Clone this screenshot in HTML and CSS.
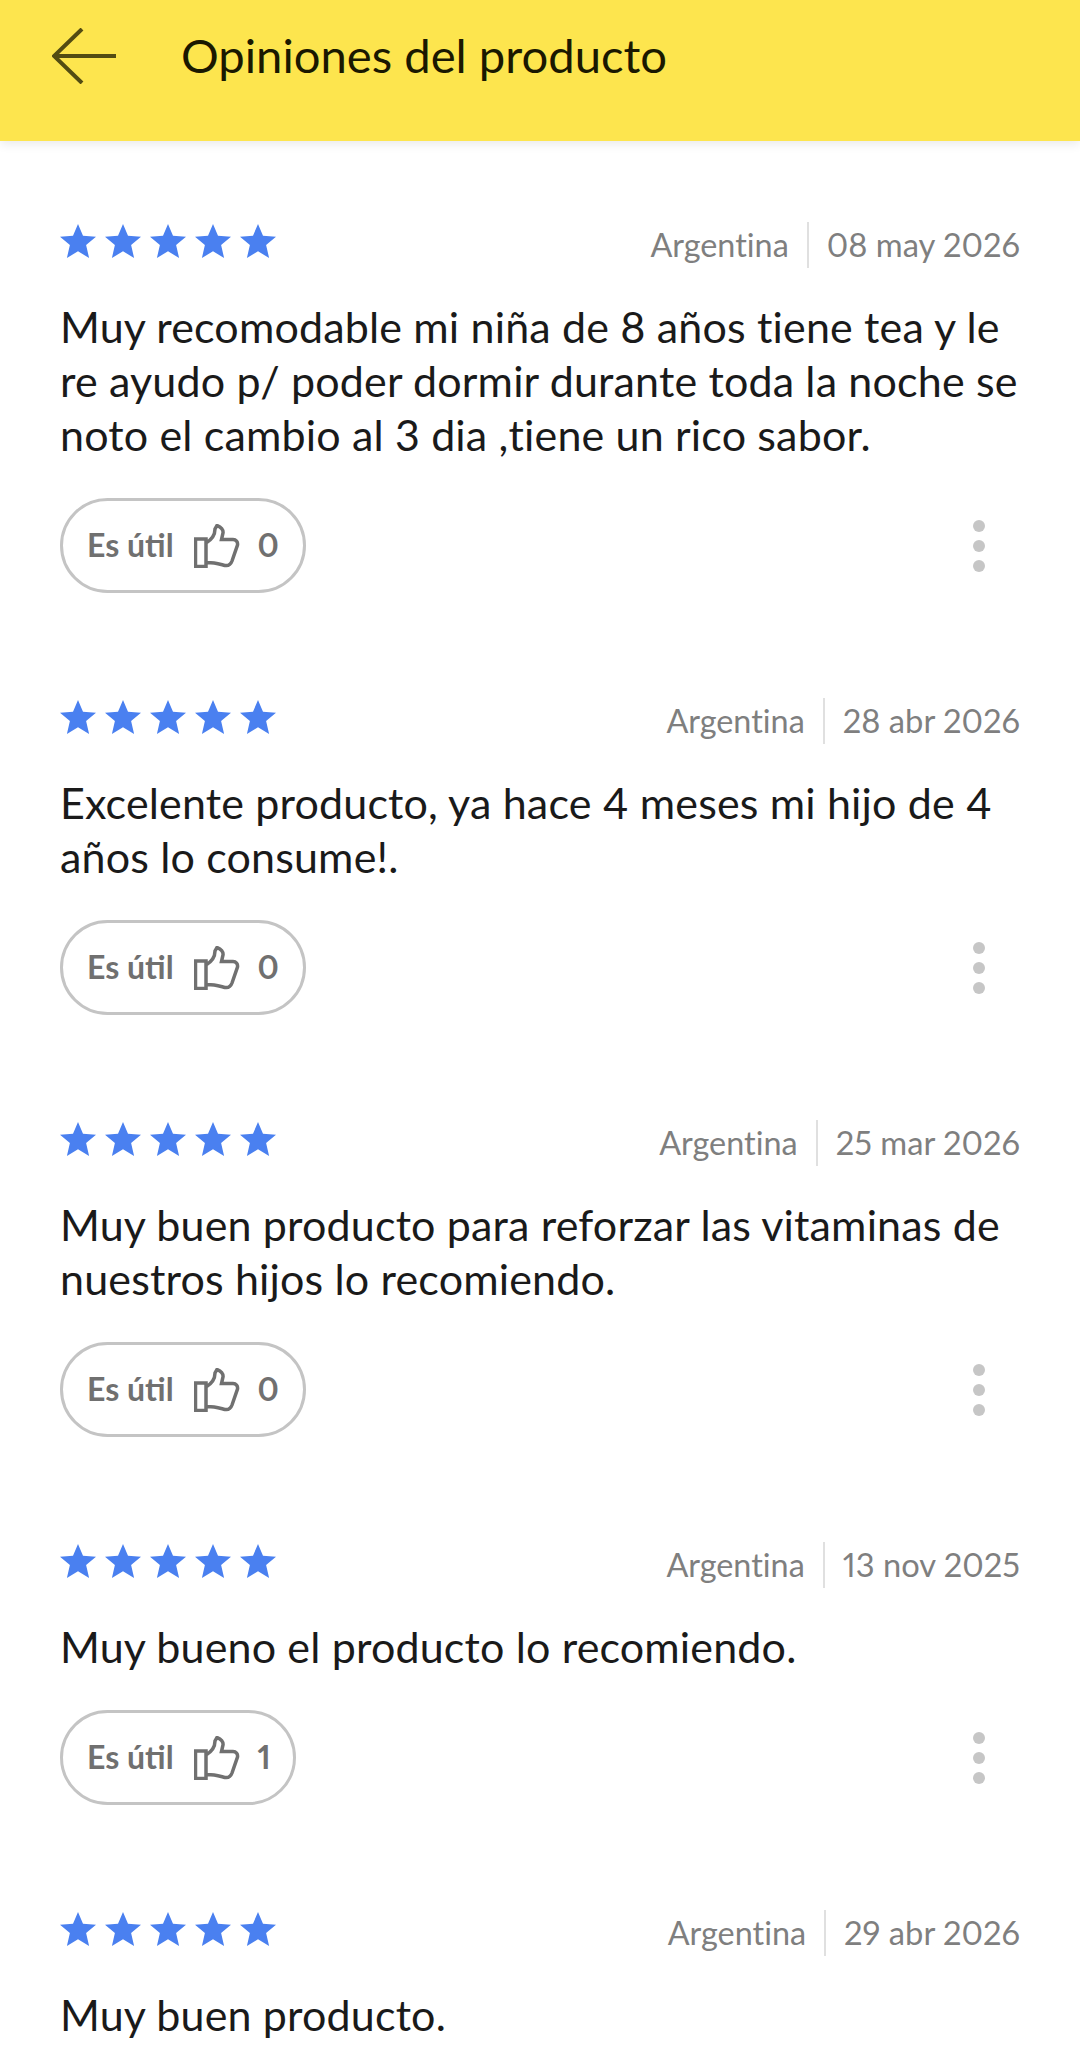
FILE: index.html
```html
<!DOCTYPE html>
<html lang="es">
<head>
<meta charset="utf-8">
<title>Opiniones del producto</title>
<link rel="stylesheet" href="styles.css">
</head>
<body>
<svg class="defs" width="0" height="0" aria-hidden="true">
  <defs>
    <symbol id="star" viewBox="0 0 36 34"><path d="M18 0l5 11.700 13 1.100-9.900 8.200 3 13L18 27.300 6.900 34l3-13L0 12.800l13-1.100z"/></symbol>
    <symbol id="thumb" viewBox="0 0 46 44"><path d="M1.500 15H12V42.500H1.500z M12 19C17 16 21 11 21 5L23 1.500C27 3 29.500 6 29 9L27.500 15.500H39C42 15.500 44 18 43.500 21L38 37C36.500 41 34 42 31 41.500C25 40 19 38 12 38.500" /></symbol>
  </defs>
</svg>
<header class="topbar">
  <svg class="back" viewBox="0 0 64 56" aria-hidden="true"><path d="M64 28H2M30 1L2 28l28 27" /></svg>
  <h1 class="title">Opiniones del producto</h1>
</header>
<main class="list">
  <article class="review">
    <div class="head">
      <div class="stars"><svg class="star"><use href="#star"/></svg><svg class="star"><use href="#star"/></svg><svg class="star"><use href="#star"/></svg><svg class="star"><use href="#star"/></svg><svg class="star"><use href="#star"/></svg></div>
      <div class="meta"><span class="place">Argentina</span><span class="date">08 may 2026</span></div>
    </div>
    <p class="text">Muy recomodable mi niña de 8 años tiene tea y le re ayudo p/ poder dormir durante toda la noche se noto el cambio al 3 dia ,tiene un rico sabor.</p>
    <div class="actions">
      <button class="useful"><span>Es útil</span><svg class="thumb"><use href="#thumb"/></svg><span>0</span></button>
      <div class="more"><i></i><i></i><i></i></div>
    </div>
  </article>
  <article class="review">
    <div class="head">
      <div class="stars"><svg class="star"><use href="#star"/></svg><svg class="star"><use href="#star"/></svg><svg class="star"><use href="#star"/></svg><svg class="star"><use href="#star"/></svg><svg class="star"><use href="#star"/></svg></div>
      <div class="meta"><span class="place">Argentina</span><span class="date">28 abr 2026</span></div>
    </div>
    <p class="text">Excelente producto, ya hace 4 meses mi hijo de 4 años lo consume!.</p>
    <div class="actions">
      <button class="useful"><span>Es útil</span><svg class="thumb"><use href="#thumb"/></svg><span>0</span></button>
      <div class="more"><i></i><i></i><i></i></div>
    </div>
  </article>
  <article class="review">
    <div class="head">
      <div class="stars"><svg class="star"><use href="#star"/></svg><svg class="star"><use href="#star"/></svg><svg class="star"><use href="#star"/></svg><svg class="star"><use href="#star"/></svg><svg class="star"><use href="#star"/></svg></div>
      <div class="meta"><span class="place">Argentina</span><span class="date">25 mar 2026</span></div>
    </div>
    <p class="text">Muy buen producto para reforzar las vitaminas de nuestros hijos lo recomiendo.</p>
    <div class="actions">
      <button class="useful"><span>Es útil</span><svg class="thumb"><use href="#thumb"/></svg><span>0</span></button>
      <div class="more"><i></i><i></i><i></i></div>
    </div>
  </article>
  <article class="review">
    <div class="head">
      <div class="stars"><svg class="star"><use href="#star"/></svg><svg class="star"><use href="#star"/></svg><svg class="star"><use href="#star"/></svg><svg class="star"><use href="#star"/></svg><svg class="star"><use href="#star"/></svg></div>
      <div class="meta"><span class="place">Argentina</span><span class="date">13 nov 2025</span></div>
    </div>
    <p class="text">Muy bueno el producto lo recomiendo.</p>
    <div class="actions">
      <button class="useful"><span>Es útil</span><svg class="thumb"><use href="#thumb"/></svg><span class="count-one">1</span></button>
      <div class="more"><i></i><i></i><i></i></div>
    </div>
  </article>
  <article class="review">
    <div class="head">
      <div class="stars"><svg class="star"><use href="#star"/></svg><svg class="star"><use href="#star"/></svg><svg class="star"><use href="#star"/></svg><svg class="star"><use href="#star"/></svg><svg class="star"><use href="#star"/></svg></div>
      <div class="meta"><span class="place">Argentina</span><span class="date">29 abr 2026</span></div>
    </div>
    <p class="text">Muy buen producto.</p>
  </article>
</main>
</body>
</html>
```
FILE: styles.css
```css
* { box-sizing: border-box; }
html, body { margin: 0; height: 100%; overflow: hidden; background: #fff; }
body { font-family: Lato, "Noto Sans", sans-serif; color: #1a1a1a; font-variant-ligatures: none; font-variant-numeric: proportional-nums; }
.defs { position: absolute; }
.topbar { height: 141px; background: #fde54e; display: flex; align-items: flex-start; padding: 28px 0 0 52px; box-shadow: 0 3px 10px rgba(0,0,0,.09); position: relative; }
.back { width: 64px; height: 56px; fill: none; stroke: #534c12; stroke-width: 4; flex: none; }
.title { margin: -1px 0 0 65px; font-size: 47.200px; font-weight: 400; line-height: 56px; color: #1a1800; }
.list { padding: 78px 60px 0 60px; }
.review { margin-bottom: 102px; }
.head { display: flex; justify-content: space-between; align-items: flex-start; height: 46px; }
.stars { display: flex; gap: 9px; fill: #4a80f0; padding-top: 5px; }
.star { width: 36px; height: 34px; }
.meta { display: flex; align-items: center; font-size: 32.700px; line-height: 46px; color: #7f7f7f; height: 46px; margin-top: 3px; }
.place { padding-right: 18px; font-size: 32.400px; }
.date { padding-left: 18px; border-left: 2px solid #e0e0e0; }
.text { margin: 35px 0 36px; font-size: 43px; letter-spacing: 0.160px; line-height: 54px; color: #1a1a1a; }
.actions { display: flex; justify-content: space-between; align-items: center; }
.useful { height: 95px; border: 3px solid #c4c4c4; border-radius: 48px; background: #fff; padding: 0 24px 0 24px; display: flex; align-items: center; gap: 20px; font: 700 32px/40px Lato, sans-serif; font-variant-numeric: proportional-nums; color: #707070; }
.useful span { position: relative; top: -1px; }
.thumb { width: 46px; height: 44px; margin-right: -2px; fill: none; stroke: #707070; stroke-width: 3.500; }
.count-one { width: 11px; }
.more { display: flex; flex-direction: column; gap: 8px; margin-right: 35px; }
.more i { display: block; width: 12px; height: 12px; border-radius: 50%; background: #c6c6c6; }
```
